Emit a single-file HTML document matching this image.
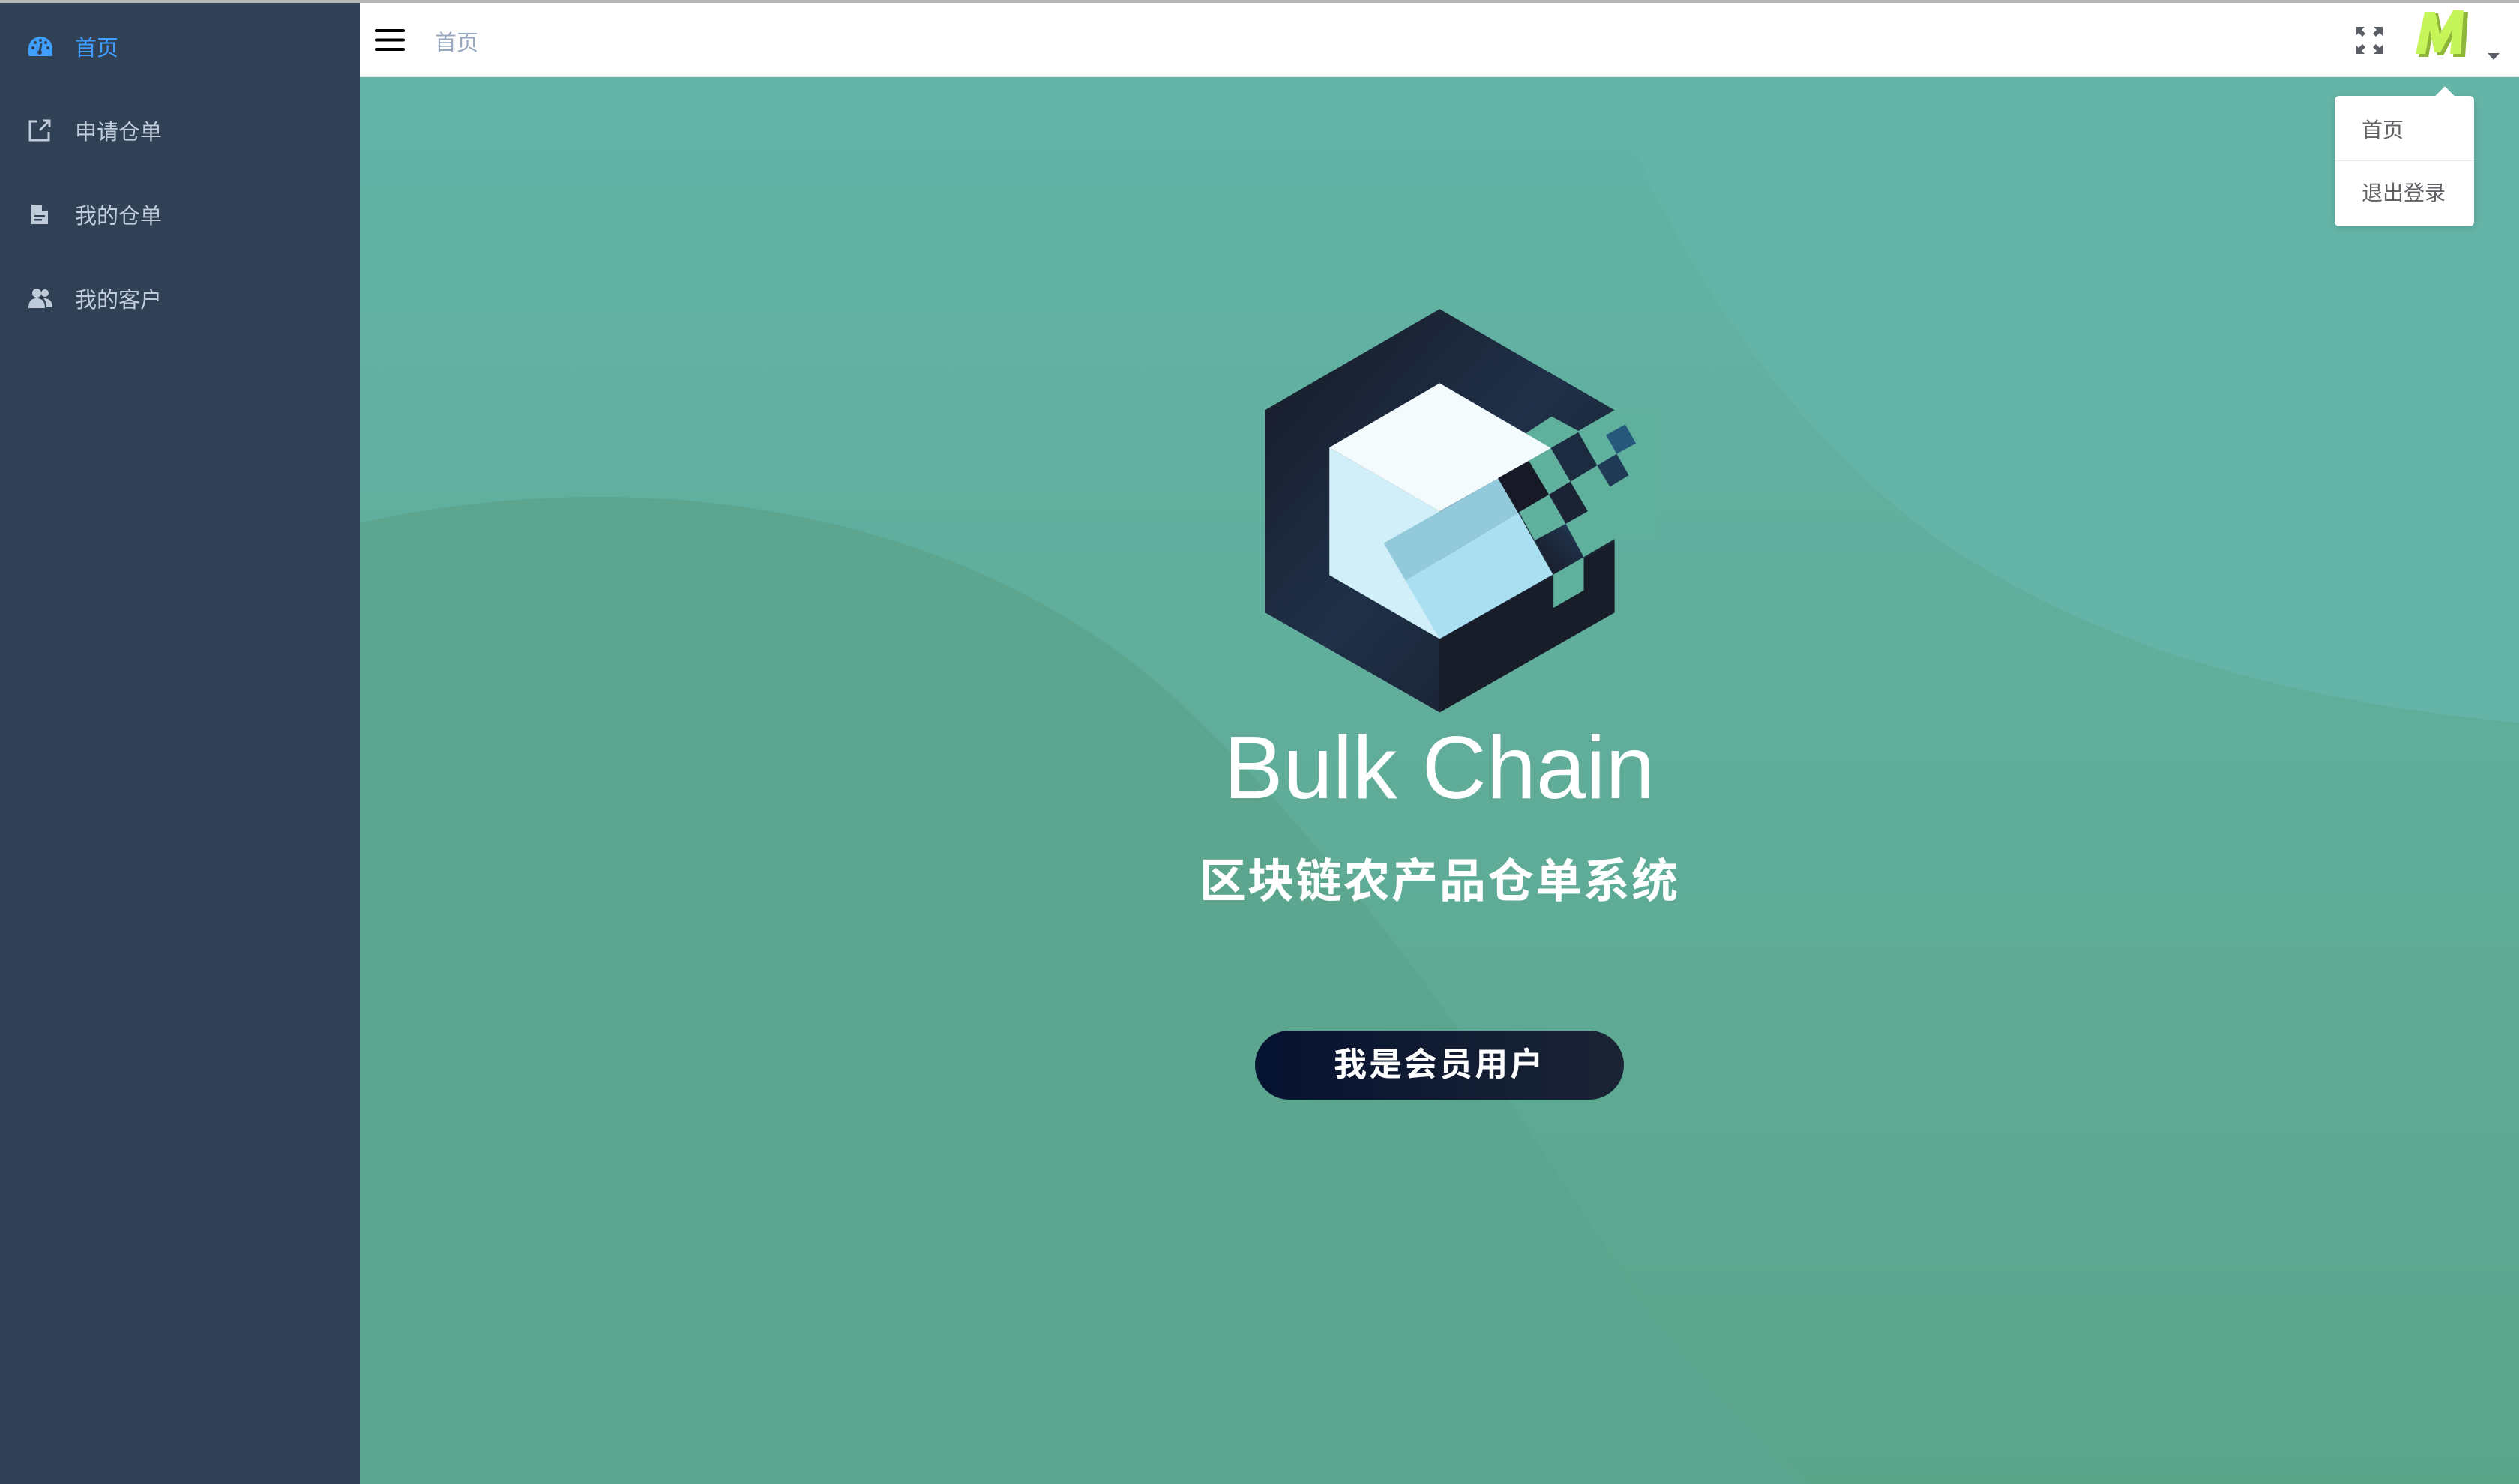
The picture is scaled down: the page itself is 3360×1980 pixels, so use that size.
<!DOCTYPE html>
<html><head><meta charset="utf-8"><style>
*{margin:0;padding:0;box-sizing:border-box}
body{width:3360px;height:1980px;overflow:hidden;position:relative;font-family:"Liberation Sans","Noto Sans CJK SC",sans-serif;background:#5fab98}
.topline{position:absolute;left:0;top:0;width:3360px;height:4px;background:#b5b5b5}
.side{position:absolute;left:0;top:4px;width:480px;height:1976px;background:#304156}
.mi{position:absolute;left:0;width:480px;height:60px;display:flex;align-items:center;font-size:29px;color:#bfcbd9}
.mi svg{position:absolute;left:38px}
.mi span{position:absolute;left:100px}
.header{position:absolute;left:480px;top:4px;width:2880px;height:99px;background:#fff;border-bottom:2px solid #e6e6e6}
.main{position:absolute;left:480px;top:103px;width:2880px;height:1877px;overflow:hidden}
.dd{position:absolute;left:3114px;top:128px;width:186px;height:174px;background:#fff;border-radius:6px;box-shadow:0 2px 12px rgba(0,0,0,.12);font-size:28px;color:#606266}
</style></head><body>
<div class="topline"></div>
<div class="side">
  <div class="mi" style="top:28px;color:#409eff"><svg width="32" height="26" viewBox="0 0 32 26"><path d="M16 0A16 16 0 0 0 0 16v8a2 2 0 0 0 2 2h28a2 2 0 0 0 2-2v-8A16 16 0 0 0 16 0z" fill="#409eff"/><circle cx="6" cy="15" r="2" fill="#304156"/><circle cx="9" cy="8" r="2" fill="#304156"/><circle cx="16" cy="5" r="2" fill="#304156"/><circle cx="23" cy="8" r="2" fill="#304156"/><circle cx="26" cy="15" r="2" fill="#304156"/><path d="M17 9l-2 12" stroke="#304156" stroke-width="3"/><circle cx="15" cy="21" r="3" fill="#304156"/></svg><span>首页</span></div>
  <div class="mi" style="top:140px"><svg width="30" height="30" viewBox="0 0 30 30" fill="none" stroke="#bfcbd9" stroke-width="3"><path d="M12 3H2v25h25V17"/><path d="M15 15L28 2M19 2h9v9"/></svg><span>申请仓单</span></div>
  <div class="mi" style="top:252px"><svg width="30" height="30" viewBox="0 0 30 30"><path d="M4 2h14l8 8v18H4z" fill="#bfcbd9"/><path d="M18 2v8h8" fill="#304156"/><rect x="8" y="16" width="14" height="2.5" fill="#304156"/><rect x="8" y="21" width="10" height="2.5" fill="#304156"/></svg><span>我的仓单</span></div>
  <div class="mi" style="top:364px"><svg width="32" height="28" viewBox="0 0 32 28" fill="#bfcbd9"><circle cx="11" cy="7" r="6"/><path d="M0 27c0-9 4-13 11-13s11 4 11 13z"/><circle cx="22" cy="7" r="5"/><path d="M20 14c7 0 12 3 12 12h-8c0-5-1-9-4-12z"/></svg><span>我的客户</span></div>
</div>
<div class="header"></div>
<svg style="position:absolute;left:500px;top:38px" width="40" height="31" viewBox="0 0 40 31"><rect x="0" y="1" width="40" height="4" rx="2"/><rect x="0" y="13.5" width="40" height="4" rx="2"/><rect x="0" y="26" width="40" height="4" rx="2"/></svg>
<div style="position:absolute;left:580px;top:34px;font-size:29px;color:#97a8be">首页</div>
<svg style="position:absolute;left:3142px;top:36px" width="36" height="36" viewBox="0 0 36 36" fill="#5a5e66"><path d="M0 0h12l-4 4 5 5-4 4-5-5-4 4z"/><path d="M36 0H24l4 4-5 5 4 4 5-5 4 4z"/><path d="M0 36h12l-4-4 5-5-4-4-5 5-4-4z"/><path d="M36 36H24l4-4-5-5 4-4 5 5 4-4z"/></svg>
<svg style="position:absolute;left:3220px;top:14px" width="80" height="80" viewBox="0 0 80 80"><path d="M6 62L18 4h14l6 30 18-32h16l-4 60H52l3-32-16 30h-8l-6-30-6 32z" fill="#8db63b"/><path d="M2 58L14 2h14l6 30 18-32h14l-4 58H48l3-32-16 30h-8l-6-30-6 32z" fill="#c6f55a"/></svg>
<svg style="position:absolute;left:3318px;top:71px" width="16" height="10" viewBox="0 0 16 10"><path d="M0 0h16L8 9z" fill="#5a5e66"/></svg>
<div class="main">
  <svg width="2880" height="1877" viewBox="480 103 2880 1877" style="position:absolute;left:0;top:0">
    <defs><linearGradient id="bg" x1="0" y1="0" x2="0" y2="1"><stop offset="0" stop-color="#63b4a7"/><stop offset="1" stop-color="#5ba58b"/></linearGradient></defs>
    <rect x="480" y="103" width="2880" height="1877" fill="url(#bg)"/>
    <path d="M2150 103C2200 300 2400 620 2650 760C2850 880 3100 940 3360 964V103Z" fill="#64b5a8"/>
    <path d="M480 697C600 672 700 663 800 663C1100 663 1400 760 1600 963C1800 1160 1950 1370 2100 1600C2200 1760 2330 1900 2410 1980H480Z" fill="#5ca58f"/>
  </svg>
  <svg style="position:absolute;left:1170px;top:287px" width="560" height="580" viewBox="0 0 1568 1568" preserveAspectRatio="none">
    <defs>
      <linearGradient id="dk" x1="0" y1="0" x2="1" y2="1"><stop offset="0" stop-color="#171a26"/><stop offset=".5" stop-color="#1f3048"/><stop offset="1" stop-color="#171a26"/></linearGradient>
      <linearGradient id="sq" x1="0" y1="1" x2="1" y2="0"><stop offset="0" stop-color="#171a26"/><stop offset=".7" stop-color="#1f2e45"/><stop offset="1" stop-color="#25587a"/></linearGradient>
    </defs>
    <polygon points="757,60 1410,425 1410,1155 757,1515 105,1155 105,425" fill="url(#dk)"/>
    <polygon points="757,1250 1410,900 1410,1155 757,1515" fill="#191c29"/>
    <polygon points="1080,508 1175,448 1275,500 1410,425 1568,425 1568,890 1410,890 1295,955 1295,1075 1182,1138 1182,1018 1000,700" fill="#60b09e"/>
    <polygon points="345,560 757,790 757,1250 345,1020" fill="#d0eff9"/>
    <polygon points="345,560 757,328 1172,562 975,672 757,790" fill="#f3fbfd"/>
    <polygon points="548,905 975,672 1050,795 630,1040" fill="#92cadb"/>
    <polygon points="630,1040 1050,795 1180,1018 757,1250" fill="#a9dff0"/>
    <polygon points="975,670 1090,608 1165,730 1050,795" fill="#171a26"/>
    <polygon points="1172,562 1275,505 1345,625 1245,683" fill="#1d2b40"/>
    <polygon points="1165,730 1245,683 1310,790 1228,835" fill="#1a2233"/>
    <polygon points="1112,895 1228,835 1295,955 1182,1018" fill="url(#sq)"/>
    <polygon points="1378,515 1450,477 1490,545 1418,583" fill="#25587a"/>
    <polygon points="1345,625 1418,583 1463,660 1393,702" fill="#1f3a55"/>
  </svg>
  <div style="position:absolute;left:0;width:2880px;top:862px;text-align:center;font-size:119px;color:#fff;line-height:1">Bulk Chain</div>
  <div style="position:absolute;left:0;width:2880px;top:1040px;text-align:center;font-size:62px;font-weight:bold;color:#fff;letter-spacing:2px;line-height:1.1">区块链农产品仓单系统</div>
  <div style="position:absolute;left:1194px;top:1272px;width:492px;height:92px;border-radius:46px;background:linear-gradient(90deg,#061331,#1b2434);color:#fff;font-size:44px;font-weight:bold;letter-spacing:3px;text-align:center;line-height:92px">我是会员用户</div>
</div>
<div class="dd">
  <div style="position:absolute;left:138px;top:-9px;width:18px;height:18px;background:#fff;transform:rotate(45deg)"></div>
  <div style="position:absolute;left:36px;top:26px;line-height:40px">首页</div>
  <div style="position:absolute;left:0;top:86px;width:186px;height:1px;background:#e8ebef"></div>
  <div style="position:absolute;left:36px;top:110px;line-height:40px">退出登录</div>
</div>
</body></html>
